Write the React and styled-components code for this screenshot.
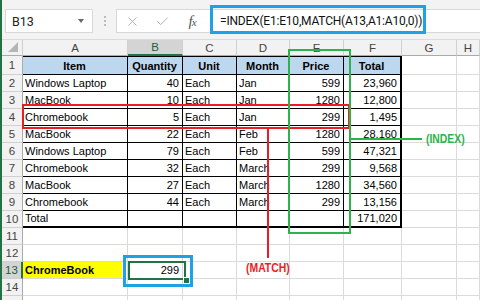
import styled, { createGlobalStyle } from "styled-components";
import { X, Check } from "lucide-react";

const GlobalStyle = createGlobalStyle`
  body {
    margin: 0;
    background: #fff;
  }
`;

const Window = styled.div`
  position: relative;
  width: 480px;
  height: 300px;
  overflow: hidden;
  box-sizing: border-box;
  border-left: 2px solid #217346;
  background: #fff;
  font-family: "Liberation Sans", Arial, sans-serif;
`;

const Toolbar = styled.div`
  height: 40px;
  box-sizing: border-box;
  display: flex;
  align-items: flex-start;
  padding: 9px 0 0 3px;
  background: #f3f3f3;
  border-bottom: 1px solid #dadada;
`;

const NameBox = styled.div`
  width: 88px;
  height: 24px;
  box-sizing: border-box;
  display: flex;
  align-items: center;
  justify-content: space-between;
  padding: 0 8px 0 6px;
  background: #fff;
  border: 1px solid #d8d8d8;
  font-family: Roboto, "Liberation Sans", sans-serif;
  font-size: 12.5px;
  color: #222;
`;

const Caret = styled.span`
  width: 0;
  height: 0;
  border-left: 3.5px solid transparent;
  border-right: 3.5px solid transparent;
  border-top: 4px solid #6a6a6a;
`;

const Grip = styled.div`
  width: 23px;
  height: 24px;
  display: flex;
  flex-direction: column;
  align-items: center;
  justify-content: center;
  gap: 2px;
`;

const Dot = styled.span`
  width: 2px;
  height: 2px;
  background: #bcbcbc;
`;

const FormulaBar = styled.div`
  flex: 1;
  height: 24px;
  box-sizing: border-box;
  display: flex;
  align-items: center;
  background: #fff;
  border: 1px solid #d8d8d8;
  border-right: none;
`;

const IconSlot = styled.span`
  width: 30px;
  display: flex;
  justify-content: center;
  align-items: center;
  color: #a8a8a8;
`;

const Fx = styled.span`
  font-family: "Liberation Serif", serif;
  font-style: italic;
  font-size: 15px;
  color: #555;
  letter-spacing: -1px;

  small {
    font-size: 11px;
  }
`;

const FormulaText = styled.span`
  padding-left: 13px;
  font-family: Roboto, "Liberation Sans", sans-serif;
  font-size: 12px;
  letter-spacing: -0.2px;
  color: #111;
  white-space: nowrap;
`;

const Sheet = styled.div`
  display: grid;
  grid-template-columns: 21px 105px 55px 54px 53px 54px 58px 55px 1fr;
  grid-template-rows: 16px 19px;
  grid-auto-rows: 17px;
  font-size: 11px;
`;

const Corner = styled.div`
  display: flex;
  align-items: flex-end;
  justify-content: flex-end;
  padding: 0 4px 3px 0;
  background: #f2f2f2;
  border-right: 1px solid #d0d0d0;
  border-bottom: 1px solid #ababab;
`;

const ColHead = styled.div`
  display: flex;
  align-items: center;
  justify-content: center;
  background: ${(p) => (p.$selected ? "#d4d4d4" : "#f2f2f2")};
  color: ${(p) => (p.$selected ? "#1f5c38" : "#444")};
  border-right: 1px solid #d0d0d0;
  border-bottom: ${(p) => (p.$selected ? "2px solid #217346" : "1px solid #ababab")};
  font-size: 11.5px;
`;

const RowHead = styled.div`
  display: flex;
  align-items: center;
  justify-content: center;
  background: ${(p) => (p.$selected ? "#d4d4d4" : "#f2f2f2")};
  color: ${(p) => (p.$selected ? "#1f5c38" : "#444")};
  border-bottom: 1px solid #d0d0d0;
  border-right: ${(p) => (p.$selected ? "2px solid #217346" : "1px solid #ababab")};
  font-size: 11.5px;
`;

const Cell = styled.div`
  display: flex;
  align-items: flex-end;
  justify-content: ${(p) => (p.$align === "right" ? "flex-end" : p.$align === "center" ? "center" : "flex-start")};
  padding: 0 3px 1px 2px;
  line-height: 13px;
  white-space: nowrap;
  color: #000;
  font-weight: ${(p) => (p.$bold ? 700 : 400)};
  background-color: ${(p) => (p.$head ? "#bdd7ee" : "transparent")};
  background-image: ${(p) => (p.$marker ? "linear-gradient(#ffff00, #ffff00)" : "none")};
  background-size: 99px 100%;
  background-repeat: no-repeat;
  border-right: ${(p) => (p.$edge ? "2px" : "1px")} solid ${(p) => (p.$table ? "#000" : "#dadada")};
  border-bottom: ${(p) => (p.$foot ? "2px" : "1px")} solid ${(p) => (p.$table ? "#000" : "#dadada")};
  box-shadow: ${(p) => (p.$top ? "inset 0 1px 0 #000" : "none")};
`;

const Frame = styled.div`
  position: absolute;
  left: ${(p) => p.$x}px;
  top: ${(p) => p.$y}px;
  width: ${(p) => p.$w}px;
  height: ${(p) => p.$h}px;
  box-sizing: border-box;
  border: ${(p) => p.$line}px solid ${(p) => p.$color};
  pointer-events: none;
`;

const Stroke = styled.div`
  position: absolute;
  left: ${(p) => p.$x}px;
  top: ${(p) => p.$y}px;
  width: ${(p) => p.$w}px;
  height: ${(p) => p.$h}px;
  background: ${(p) => p.$color};
`;

const Handle = styled.div`
  position: absolute;
  left: 181px;
  top: 277px;
  width: 5px;
  height: 5px;
  background: #217346;
  border: 1px solid #fff;
`;

const Label = styled.span`
  position: absolute;
  left: ${(p) => p.$x}px;
  top: ${(p) => p.$y}px;
  font-family: "Liberation Sans", Arial, sans-serif;
  font-weight: 700;
  font-size: 13px;
  line-height: 15px;
  transform: scaleX(0.8);
  transform-origin: left center;
  color: ${(p) => p.$color};
  white-space: nowrap;
`;

const COLS = ["A", "B", "C", "D", "E", "F", "G", "H"];

const TABLE = [
  ["Item", "Quantity", "Unit", "Month", "Price", "Total"],
  ["Windows Laptop", "40", "Each", "Jan", "599", "23,960"],
  ["MacBook", "10", "Each", "Jan", "1280", "12,800"],
  ["Chromebook", "5", "Each", "Jan", "299", "1,495"],
  ["MacBook", "22", "Each", "Feb", "1280", "28,160"],
  ["Windows Laptop", "79", "Each", "Feb", "599", "47,321"],
  ["Chromebook", "32", "Each", "March", "299", "9,568"],
  ["MacBook", "27", "Each", "March", "1280", "34,560"],
  ["Chromebook", "44", "Each", "March", "299", "13,156"],
  ["Total", "", "", "", "", "171,020"],
];

const isNumber = (v) => /^[\d,]+$/.test(v);

const RED = "#ec1c24";
const GREEN = "#2eb34b";
const BLUE = "#1ba3e6";

export default function App() {
  const rows = [];
  for (let r = 1; r <= 15; r++) {
    // row 15 only peeks in under the bottom edge, its number is off screen
    rows.push(
      <RowHead key={`h${r}`} $selected={r === 13}>
        {r < 15 ? r : ""}
      </RowHead>
    );
    COLS.forEach((c, ci) => {
      const inTable = r <= 10 && ci < 6;
      let value = inTable ? TABLE[r - 1][ci] : "";
      if (r === 13 && c === "A") value = "ChromeBook";
      if (r === 13 && c === "B") value = "299";
      const align = r === 1 && inTable ? "center" : isNumber(value) ? "right" : "left";
      rows.push(
        <Cell
          key={`${c}${r}`}
          $table={inTable}
          $head={r === 1 && inTable}
          $top={r === 1 && inTable}
          $edge={inTable && ci === 5}
          $foot={r === 10 && inTable}
          $bold={r === 1 || (r === 13 && c === "A")}
          $marker={r === 13 && c === "A"}
          $align={align}
        >
          {value}
        </Cell>
      );
    });
  }

  return (
    <Window>
      <GlobalStyle />
      <Toolbar>
        <NameBox>
          B13
          <Caret />
        </NameBox>
        <Grip>
          <Dot />
          <Dot />
          <Dot />
        </Grip>
        <FormulaBar>
          <IconSlot>
            <X size={15} strokeWidth={1.4} />
          </IconSlot>
          <IconSlot>
            <Check size={15} strokeWidth={1.4} />
          </IconSlot>
          <IconSlot>
            <Fx>
              f<small>x</small>
            </Fx>
          </IconSlot>
          <FormulaText>=INDEX(E1:E10,MATCH(A13,A1:A10,0))</FormulaText>
        </FormulaBar>
      </Toolbar>

      <Sheet>
        <Corner>
          <svg width="10" height="10" viewBox="0 0 10 10">
            <path d="M10 0 L10 10 L0 10 Z" fill="#b5b5b5" />
          </svg>
        </Corner>
        {COLS.map((c) => (
          <ColHead key={c} $selected={c === "B"}>
            {c}
          </ColHead>
        ))}
        {rows}
      </Sheet>

      <Frame $x={208} $y={5} $w={216} $h={29} $line={3} $color={BLUE} />

      <Frame $x={20} $y={104} $w={328} $h={25} $line={2} $color={RED} />
      <Stroke $x={265} $y={129} $w={2} $h={129} $color={RED} />
      <Label $x={244} $y={260} $color={RED}>(MATCH)</Label>

      <Frame $x={286} $y={49} $w={63} $h={185} $line={2} $color={GREEN} />
      <Stroke $x={349} $y={138} $w={71} $h={2} $color={GREEN} />
      <Label $x={424} $y={131} $color={GREEN}>(INDEX)</Label>

      <Frame $x={121} $y={255} $w={70} $h={32} $line={3} $color={BLUE} />
      <Frame $x={126} $y={261} $w={58} $h={19} $line={2} $color="#217346" />
      <Handle />
    </Window>
  );
}
